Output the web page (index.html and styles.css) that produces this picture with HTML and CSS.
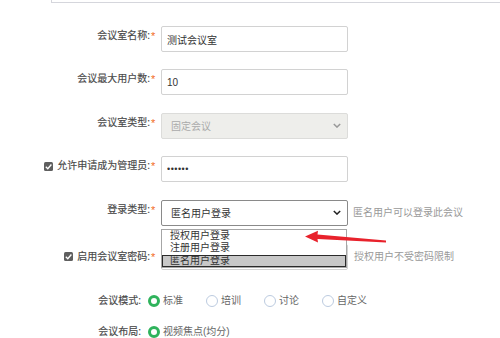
FILE: index.html
```html
<!DOCTYPE html>
<html lang="zh-CN">
<head>
<meta charset="utf-8">
<title>会议室设置</title>
<link rel="stylesheet" href="styles.css">
</head>
<body>
<div class="topbox"></div>
<form class="form">
  <div class="row">
    <label class="lbl">会议室名称:<span class="req">*</span></label>
    <input class="field" type="text" value="测试会议室">
  </div>
  <div class="row">
    <label class="lbl">会议最大用户数: <span class="req">*</span></label>
    <input class="field" type="text" value="10">
  </div>
  <div class="row">
    <label class="lbl">会议室类型: <span class="req">*</span></label>
    <div class="field sel disabled"><span>固定会议</span><svg class="chev" viewBox="0 0 10 6"><path d="M1 1 L5 5 L9 1" /></svg></div>
  </div>
  <div class="row">
    <label class="lbl"><span class="cb"><svg viewBox="0 0 10 10"><path d="M2 5.2 L4.2 7.4 L8.2 2.8"/></svg></span>允许申请成为管理员:<span class="req">*</span></label>
    <input class="field pw" type="text" value="••••••">
  </div>
  <div class="row">
    <label class="lbl">登录类型:<span class="req">*</span></label>
    <div class="selwrap">
      <div class="field sel dark"><span>匿名用户登录</span><svg class="chev" viewBox="0 0 10 6"><path d="M1 1 L5 5 L9 1" /></svg></div>
      <ul class="dropdown">
        <li>授权用户登录</li>
        <li>注册用户登录</li>
        <li class="hl">匿名用户登录</li>
      </ul>
    </div>
    <span class="hint">匿名用户可以登录此会议</span>
  </div>
  <div class="row row6">
    <label class="lbl"><span class="cb"><svg viewBox="0 0 10 10"><path d="M2 5.2 L4.2 7.4 L8.2 2.8"/></svg></span>启用会议室密码: <span class="req">*</span></label>
    <input class="field" type="text" value="">
    <span class="hint">授权用户不受密码限制</span>
  </div>
  <div class="radios">
    <div class="row rrow">
      <label class="lbl rl">会议模式:</label>
      <div class="opts">
        <span class="opt"><span class="rd on"></span>标准</span>
        <span class="opt"><span class="rd"></span>培训</span>
        <span class="opt"><span class="rd"></span>讨论</span>
        <span class="opt"><span class="rd"></span>自定义</span>
      </div>
    </div>
    <div class="row rrow">
      <label class="lbl rl">会议布局:</label>
      <div class="opts">
        <span class="opt"><span class="rd on"></span>视频焦点(均分)</span>
      </div>
    </div>
  </div>
</form>
<svg class="arrow" width="500" height="338" viewBox="0 0 500 338">
  <polygon points="305,236.6 318,230.8 317.5,234.4 386,240.4 386,242.6 317.5,239 318,242.4" />
</svg>
</body>
</html>
```
FILE: styles.css
```css
html, body {
  margin: 0;
  padding: 0;
  background: #fff;
}
body {
  width: 500px;
  height: 338px;
  overflow: hidden;
  position: relative;
  font-family: "Liberation Sans", "Noto Sans CJK SC", sans-serif;
  font-size: 10px;
  color: #555;
}
.topbox {
  margin-left: 51px;
  height: 2px;
  border-left: 1px solid #d5d6dc;
  border-bottom: 1px solid #d5d6dc;
}
.form {
  margin: 0;
  padding-top: 23px;
  display: flex;
  flex-direction: column;
  gap: 17.4px;
}
.row {
  display: flex;
  align-items: flex-start;
  height: 26px;
}
.lbl {
  width: 157px;
  flex: none;
  text-align: right;
  line-height: 20px;
  color: #484848;
  -webkit-text-stroke: 0.15px #484848;
  display: flex;
  justify-content: flex-end;
  align-items: center;
  white-space: nowrap;
}
.req {
  color: #f26b1d;
  -webkit-text-stroke: 0;
  font-family: "Liberation Sans", sans-serif;
  font-size: 11px;
  margin-left: 1px;
  width: 6px;
  text-align: left;
}
.field {
  box-sizing: border-box;
  margin: 0 0 0 4px;
  width: 187px;
  height: 26px;
  border: 1px solid #d2d2d2;
  border-radius: 2px;
  padding: 0 0 0 5px;
  font-family: "Liberation Sans", "Noto Sans CJK SC", sans-serif;
  font-size: 10px;
  color: #333;
  background: #fff;
  outline: none;
}
.pw {
  letter-spacing: 0.5px;
  font-size: 9px;
}
.sel {
  display: flex;
  align-items: center;
  justify-content: space-between;
  padding: 0 6px 0 9px;
}
.sel.disabled {
  background: #eeeeeb;
  border-color: #dcdcda;
  color: #aaa;
}
.sel.disabled .chev path {
  stroke: #999;
}
.sel.dark {
  border-color: #8a8a8a;
  margin-left: 0;
}
.chev {
  width: 8px;
  height: 5px;
}
.chev path {
  fill: none;
  stroke: #222;
  stroke-width: 1.8;
}
.selwrap {
  position: relative;
  margin-left: 4px;
  width: 186px;
  height: 26px;
  z-index: 2;
}
.dropdown {
  position: absolute;
  left: 0;
  top: 29px;
  width: 186px;
  box-sizing: border-box;
  margin: 0;
  padding: 0;
  list-style: none;
  border: 1px solid #a6a6a6;
  background: #fff;
}
.dropdown li {
  height: 12.5px;
  line-height: 12.5px;
  padding-left: 8px;
  color: #333;
  font-size: 10px;
}
.dropdown li.hl {
  background: #c8c8c8;
  outline: 1px solid #2a2a2a;
  outline-offset: -1px;
}
.hint {
  margin-left: 6px;
  line-height: 26px;
  color: #999;
}
.row6 {
  margin-top: 1px;
}
.row6 .lbl {
  line-height: 26px;
}
.cb {
  width: 9px;
  height: 9px;
  background: #5f5f5f;
  border-radius: 1.5px;
  margin-right: 4px;
  display: inline-flex;
}
.cb svg {
  width: 9px;
  height: 9px;
}
.cb path {
  fill: none;
  stroke: #fff;
  stroke-width: 1.5;
}
.radios {
  display: flex;
  flex-direction: column;
  gap: 5px;
  margin-top: 1px;
}
.rrow {
  align-items: center;
}
.rl {
  width: 141px;
  line-height: 26px;
}
.opts {
  display: flex;
  margin-left: 7px;
  gap: 23px;
  color: #666;
}
.opt {
  display: inline-flex;
  align-items: center;
  gap: 3px;
  line-height: 14px;
}
.rd {
  box-sizing: border-box;
  width: 12px;
  height: 12px;
  border-radius: 50%;
  border: 1px solid #bccbe0;
  background: #fff;
}
.rd.on {
  border: 3.5px solid #2fb35c;
}
.arrow {
  position: absolute;
  left: 0;
  top: 0;
  pointer-events: none;
  z-index: 5;
}
.arrow polygon {
  fill: #e8222c;
}
```
